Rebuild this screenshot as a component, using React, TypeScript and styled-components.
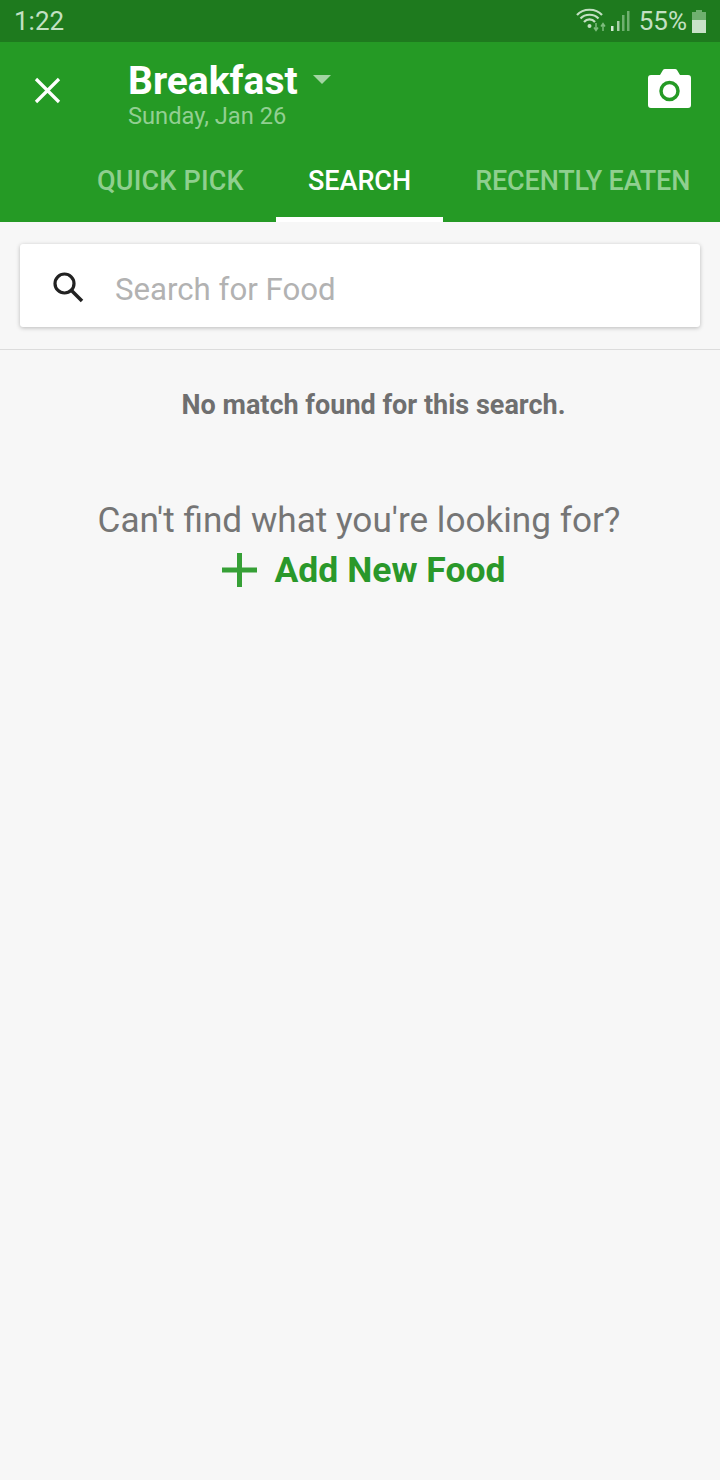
import { createGlobalStyle } from "styled-components";
import styled from "styled-components";

const Global = createGlobalStyle`
  html, body {
    margin: 0;
    padding: 0;
    background: #f7f7f7;
  }
  body {
    font-family: Roboto, "Noto Sans", sans-serif;
  }
`;

const Page = styled.div`
  width: 720px;
  height: 1480px;
  background: #f7f7f7;
  overflow: hidden;
`;

const StatusBar = styled.div`
  height: 42px;
  background: #1e7a1e;
  color: #c3e0c3;
  display: flex;
  align-items: center;
  justify-content: space-between;
  padding: 0 14px;
  box-sizing: border-box;
`;

const Time = styled.span`
  font-size: 26px;
  line-height: 42px;
`;

const StatusRight = styled.div`
  display: flex;
  align-items: center;
`;

const Percent = styled.span`
  font-size: 26px;
  line-height: 42px;
  margin: 0 5px 0 9px;
`;

const Header = styled.header`
  height: 180px;
  background: #259a25;
  display: flex;
  flex-direction: column;
`;

const TopRow = styled.div`
  height: 90px;
  flex: none;
  box-sizing: border-box;
  display: flex;
  align-items: flex-start;
  padding: 17px 29px 0 34px;
`;

const CloseButton = styled.div`
  width: 27px;
  height: 27px;
  margin-top: 18px;
  flex: none;
`;

const TitleBlock = styled.div`
  margin: 1px 0 0 67px;
  flex: 1;
`;

const TitleRow = styled.div`
  display: flex;
  align-items: flex-start;
`;

const Title = styled.div`
  color: #fff;
  font-size: 39px;
  line-height: 42px;
  font-weight: 700;
`;

const Caret = styled.div`
  width: 0;
  height: 0;
  margin: 15px 0 0 15px;
  border-left: 9px solid transparent;
  border-right: 9px solid transparent;
  border-top: 9px solid #a3d5a3;
`;

const Subtitle = styled.div`
  color: #92cf92;
  font-size: 23.7px;
  line-height: 28px;
`;

const CameraIcon = styled.svg`
  margin-top: 10px;
  flex: none;
`;

const Tabs = styled.nav`
  height: 90px;
  flex: none;
  display: flex;
  padding-left: 65px;
  overflow: hidden;
`;

const Tab = styled.div<{ $active?: boolean; $spacing?: number }>`
  flex: none;
  height: 90px;
  box-sizing: border-box;
  padding: 33px 32px 0;
  font-size: 27px;
  line-height: 32px;
  font-weight: 500;
  letter-spacing: ${(p) => p.$spacing ?? 0}px;
  color: ${(p) => (p.$active ? "#fff" : "#8fcf8f")};
  border-bottom: 5px solid ${(p) => (p.$active ? "#fff" : "transparent")};
`;

const SearchArea = styled.div`
  height: 128px;
  box-sizing: border-box;
  padding: 22px 20px 0;
  border-bottom: 1px solid #dcdcdc;
`;

const SearchBox = styled.div`
  height: 83px;
  background: #fff;
  border-radius: 3px;
  box-shadow: 0 1px 4px rgba(0, 0, 0, 0.25);
  display: flex;
  align-items: center;
  padding-left: 30px;
`;

const SearchIcon = styled.svg`
  margin-top: 2px;
  flex: none;
`;

const Placeholder = styled.span`
  color: #b2b2b2;
  font-size: 31.2px;
  margin-left: 29px;
  padding-top: 8px;
`;

const NoMatch = styled.div`
  color: #6f6f6f;
  font-size: 27px;
  line-height: 32px;
  font-weight: 700;
  text-align: center;
  padding-top: 39px;
  padding-left: 27px;
`;

const Prompt = styled.div`
  margin-top: 79px;
  padding-right: 2px;
  color: #757575;
  font-size: 35.15px;
  line-height: 40px;
  text-align: center;
`;

const AddRow = styled.div`
  margin-top: 10px;
  display: flex;
  align-items: center;
  justify-content: center;
  padding-left: 7px;
  gap: 18px;
  color: #2a982a;
  font-size: 35.5px;
  line-height: 40px;
  font-weight: 700;
`;

export default function App() {
  return (
    <Page>
      <Global />
      <StatusBar>
        <Time>1:22</Time>
        <StatusRight>
          <svg width="54" height="32" viewBox="0 0 54 32" fill="none">
            <path d="M1 10 C7 3 20 3 26 10" stroke="#c3e0c3" strokeWidth="2.2" />
            <path d="M4.5 13.5 C9 8.5 18 8.5 22.5 13.5" stroke="#c3e0c3" strokeWidth="2.2" />
            <path d="M8 17 C11 13.5 16 13.5 19 17" stroke="#c3e0c3" strokeWidth="2.2" />
            <circle cx="13.5" cy="21" r="2" fill="#c3e0c3" />
            <path d="M20 18 V25 M18 22.5 L20 25.5 L22 22.5" stroke="#7dbb7d" strokeWidth="1.5" />
            <path d="M27 19 V26 M25 21.5 L27 18.5 L29 21.5" stroke="#7dbb7d" strokeWidth="1.5" />
            <rect x="35" y="21" width="2.5" height="5" fill="#d6ebd6" />
            <rect x="41" y="16" width="2.5" height="10" fill="#a8d0a8" />
            <rect x="46" y="10" width="2.5" height="16" fill="#6fb06f" />
            <rect x="51" y="6" width="2.5" height="20" fill="#6fb06f" />
          </svg>
          <Percent>55%</Percent>
          <svg width="14" height="23" viewBox="0 0 14 23">
            <path d="M4 0 H10 V2 H14 V10 H0 V2 H4 Z" fill="#6fb06f" />
            <rect x="0" y="10" width="14" height="13" fill="#c8e2c8" />
          </svg>
        </StatusRight>
      </StatusBar>
      <Header>
        <TopRow>
          <CloseButton>
            <svg width="27" height="27" viewBox="0 0 27 27">
              <path d="M2 2 L25 25 M25 2 L2 25" stroke="#fff" strokeWidth="3.2" />
            </svg>
          </CloseButton>
          <TitleBlock>
            <TitleRow>
              <Title>Breakfast</Title>
              <Caret />
            </TitleRow>
            <Subtitle>Sunday, Jan 26</Subtitle>
          </TitleBlock>
          <CameraIcon width="43" height="40" viewBox="0 0 43 40">
            <path
              d="M12 6 L15 1 Q15.5 0 17 0 H27 Q28.5 0 29 1 L32 6 H40 Q43 6 43 9 V36 Q43 39 40 39 H3 Q0 39 0 36 V9 Q0 6 3 6 Z"
              fill="#fff"
            />
            <circle cx="21.5" cy="22" r="8.5" fill="none" stroke="#259a25" strokeWidth="3.5" />
          </CameraIcon>
        </TopRow>
        <Tabs>
          <Tab $spacing={0.2}>QUICK PICK</Tab>
          <Tab $active>SEARCH</Tab>
          <Tab $spacing={-0.15}>RECENTLY EATEN</Tab>
        </Tabs>
      </Header>
      <SearchArea>
        <SearchBox>
          <SearchIcon width="36" height="36" viewBox="0 0 36 36" fill="none">
            <circle cx="14.5" cy="14.5" r="9.5" stroke="#222" strokeWidth="3.2" />
            <path d="M21.5 21.5 L32 32" stroke="#222" strokeWidth="3.6" />
          </SearchIcon>
          <Placeholder>Search for Food</Placeholder>
        </SearchBox>
      </SearchArea>
      <NoMatch>No match found for this search.</NoMatch>
      <Prompt>Can't find what you're looking for?</Prompt>
      <AddRow>
        <svg width="35" height="34" viewBox="0 0 35 34">
          <path d="M0 17 H35 M17.5 0 V34" stroke="#36a036" strokeWidth="5" />
        </svg>
        Add New Food
      </AddRow>
    </Page>
  );
}
